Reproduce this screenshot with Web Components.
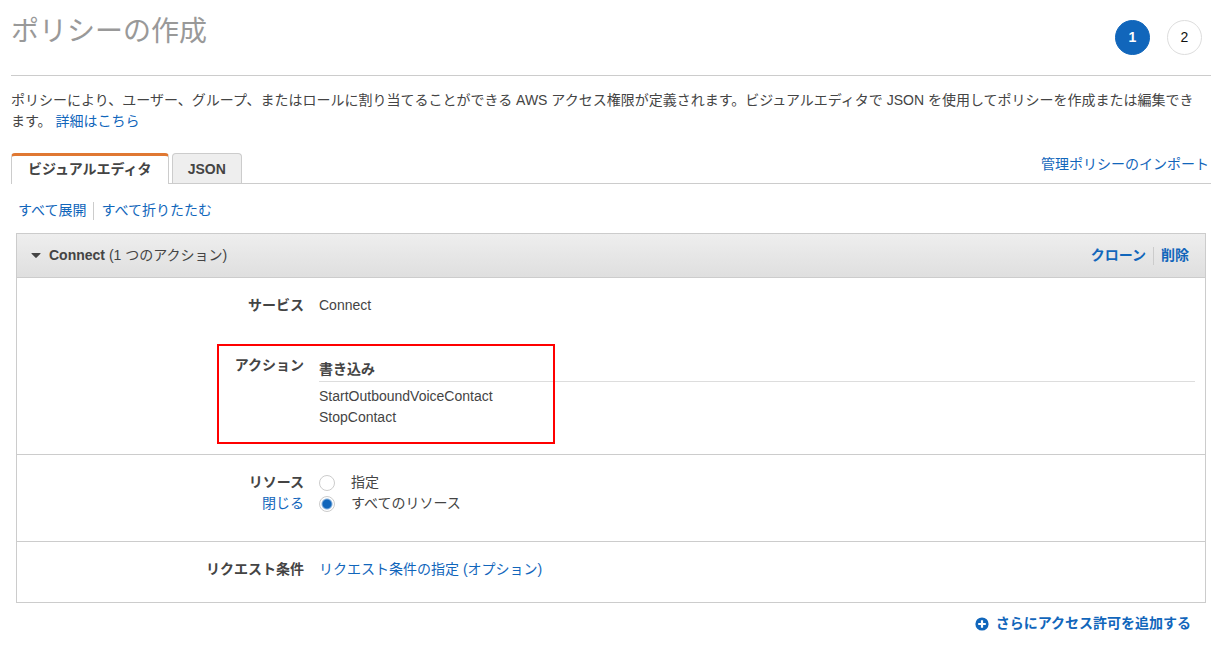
<!DOCTYPE html>
<html lang="ja">
<head>
<meta charset="utf-8">
<title>ポリシーの作成</title>
<style>
body {
  margin: 0;
  background: #fff;
  color: #444;
  font: 14px/21px "Liberation Sans", "Noto Sans CJK JP", sans-serif;
  --link: #1166bb;
  --line: #ccc;
}
</style>
</head>
<body>
<policy-page></policy-page>

<script>
const base = `
  * { box-sizing: border-box; }
  a { color: var(--link); text-decoration: none; }
  a:hover { text-decoration: underline; }
`;

function define(name, html) {
  const template = document.createElement('template');
  template.innerHTML = html;
  customElements.define(name, class extends HTMLElement {
    constructor() {
      super();
      this.attachShadow({ mode: 'open' }).append(template.content.cloneNode(true));
    }
  });
}

define('step-badge', `
  <style>${base}
    :host { display: flex; align-items: center; justify-content: center; box-sizing: border-box;
      width: 35px; height: 35px; border: 1px solid #ddd; border-radius: 50%; color: #111; }
    :host([current]) { background: var(--link); border-color: var(--link); color: #fff; font-weight: bold; }
  </style>
  <slot></slot>`);

define('page-header', `
  <style>${base}
    :host { display: flex; justify-content: space-between; box-sizing: border-box; height: 76px;
      border-bottom: 1px solid var(--line); }
    h1 { margin: 12px 0 0; font-size: 28px; line-height: 40px; font-weight: normal; color: #999; }
    nav { display: flex; gap: 17px; padding: 20px 9px 0 0; }
  </style>
  <h1><slot></slot></h1>
  <nav aria-label="手順"><slot name="steps"></slot></nav>`);

define('editor-tab', `
  <style>${base}
    :host { display: block; }
    button { display: block; height: 30px; padding: 1px 15px 0; font: inherit; font-weight: bold; color: #444;
      background: #eee; border: 1px solid var(--line); border-bottom: 0; border-radius: 4px 4px 0 0; }
    :host([selected]) { margin-bottom: -1px; }
    :host([selected]) button { height: 31px; padding: 0 16px 2px; background: #fff; border-top: 3px solid #e07832; }
  </style>
  <button type="button" role="tab"><slot></slot></button>`);

define('tab-bar', `
  <style>${base}
    :host { display: flex; justify-content: space-between; border-bottom: 1px solid var(--line); }
    [role=tablist] { display: flex; gap: 3px; }
  </style>
  <div role="tablist"><slot></slot></div>
  <slot name="action"></slot>`);

define('link-pair', `
  <style>${base}
    :host { display: flex; align-items: center; gap: 7px; }
    i { width: 1px; height: 18px; background: var(--line); }
  </style>
  <slot name="first"></slot><i></i><slot name="second"></slot>`);

define('policy-row', `
  <style>${base}
    :host { display: grid; grid-template-columns: 287px minmax(0, 1fr); column-gap: 15px; align-items: start;
      position: relative; box-sizing: border-box; padding: 17px 10px 0 0; }
    .label { text-align: right; }
    .name { font-weight: bold; }
  </style>
  <div class="label"><div class="name"><slot name="label"></slot></div><slot name="sub"></slot></div>
  <div><slot></slot></div>
  <slot name="overlay"></slot>`);

define('highlight-frame', `
  <style>
    :host { position: absolute; left: 200px; top: 6px; width: 338px; height: 100px;
      box-sizing: border-box; border: 2px solid #f00; pointer-events: none; }
  </style>`);

define('action-group', `
  <style>${base}
    :host { display: block; }
    h3 { margin: 4px 0 4px; padding-bottom: 1px; font-size: 14px; line-height: 21px; border-bottom: 1px solid #ddd; }
    ul { margin: 0; padding: 0; list-style: none; }
  </style>
  <h3><slot name="heading"></slot></h3>
  <ul><li><slot name="first"></slot></li><li><slot name="second"></slot></li></ul>`);

define('resource-choice', `
  <style>${base}
    :host { display: block; }
    label { display: flex; align-items: center; gap: 16px; width: fit-content; }
    input { appearance: none; width: 16px; height: 16px; margin: 0; border: 1px solid #ccc; border-radius: 50%;
      background: #fff; }
    input:checked { background: radial-gradient(circle, var(--link) 4px, #fff 6px); }
  </style>
  <label><input type="radio" name="resource">指定</label>
  <label><input type="radio" name="resource" checked>すべてのリソース</label>`);

define('policy-panel', `
  <style>${base}
    :host { display: block; border: 1px solid var(--line); }
    header { display: flex; align-items: center; height: 44px; padding: 0 16px 0 14px;
      background: linear-gradient(#eee, #dfdfdf); border-bottom: 1px solid var(--line); }
    button { display: flex; align-items: center; gap: 8px; padding: 0; border: 0; background: none;
      font: inherit; color: inherit; }
    svg { width: 10px; height: 5px; }
    .tools { margin-left: auto; font-weight: bold; }
  </style>
  <header>
    <button type="button" aria-expanded="true">
      <svg viewBox="0 0 10 5"><path d="M1 0h8q1 0 .4.7L5.7 4.6q-.7.7-1.4 0L.6.7Q0 0 1 0z" fill="#444"/></svg>
      <span><slot name="title"></slot></span>
    </button>
    <div class="tools"><slot name="tools"></slot></div>
  </header>
  <slot></slot>`);

define('add-link', `
  <style>${base}
    :host { display: flex; justify-content: flex-end; }
    a { display: flex; align-items: center; gap: 7px; font-weight: bold; }
    svg { width: 14px; height: 14px; }
  </style>
  <a href="#add"><svg viewBox="0 0 14 14"><circle cx="7" cy="7" r="6.6" fill="#1166bb"/><path d="M7 3.2v7.6M3.2 7h7.6" stroke="#fff" stroke-width="2.2"/></svg><slot></slot></a>`);

define('policy-page', `
  <style>${base}
    :host { display: block; padding: 0 8px 12px 11px; }
    p { margin: 14px 0 21px; padding-right: 8px; }
    .import { align-self: center; padding: 0 2px 8px 0; }
    .expand { margin: 16px 0 12px 7px; }
    policy-panel { margin: 0 5px; }
    .actions { height: 116px; }
    .service { height: 60px; }
    .resources { height: 87px; border-top: 1px solid var(--line); }
    .conditions { height: 61px; border-top: 1px solid var(--line); }
    add-link { margin: 10px 20px 0 0; }
  </style>
  <page-header>ポリシーの作成
    <step-badge slot="steps" current>1</step-badge>
    <step-badge slot="steps">2</step-badge>
  </page-header>
  <p>ポリシーにより、ユーザー、グループ、またはロールに割り当てることができる AWS アクセス権限が定義されます。ビジュアルエディタで JSON を使用してポリシーを作成または編集できます。 <a href="#more">詳細はこちら</a></p>
  <tab-bar>
    <editor-tab selected>ビジュアルエディタ</editor-tab>
    <editor-tab>JSON</editor-tab>
    <a class="import" slot="action" href="#import">管理ポリシーのインポート</a>
  </tab-bar>
  <link-pair class="expand"><a slot="first" href="#expand">すべて展開</a><a slot="second" href="#collapse">すべて折りたたむ</a></link-pair>
  <policy-panel>
    <span slot="title"><b>Connect</b> (1 つのアクション)</span>
    <link-pair slot="tools"><a slot="first" href="#clone">クローン</a><a slot="second" href="#delete">削除</a></link-pair>
    <policy-row class="service"><span slot="label">サービス</span>Connect</policy-row>
    <policy-row class="actions"><span slot="label">アクション</span>
      <action-group>
        <span slot="heading">書き込み</span>
        <span slot="first">StartOutboundVoiceContact</span>
        <span slot="second">StopContact</span>
      </action-group>
      <highlight-frame slot="overlay"></highlight-frame>
    </policy-row>
    <policy-row class="resources"><span slot="label">リソース</span><a slot="sub" href="#close">閉じる</a>
      <resource-choice></resource-choice>
    </policy-row>
    <policy-row class="conditions"><span slot="label">リクエスト条件</span><a href="#conditions">リクエスト条件の指定 (オプション)</a></policy-row>
  </policy-panel>
  <add-link>さらにアクセス許可を追加する</add-link>`);
</script>
</body>
</html>
